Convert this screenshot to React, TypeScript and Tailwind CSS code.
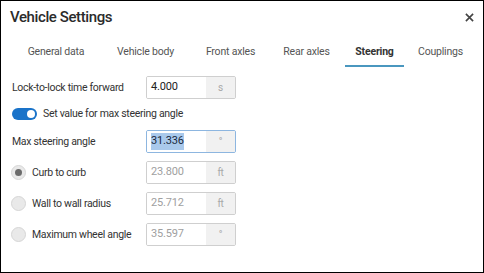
import { useState } from "react";

const TABS = [
  { label: "General data", w: "w-[90px]" },
  { label: "Vehicle body", w: "w-[89px]" },
  { label: "Front axles", w: "w-[81px]" },
  { label: "Rear axles", w: "w-[71px]" },
  { label: "Steering", w: "w-[65px]" },
  { label: "Couplings", w: "w-[67px]" },
];

function UnitInput({
  value,
  unit,
  disabled,
  focused,
}: {
  value: string;
  unit: string;
  disabled?: boolean;
  focused?: boolean;
}) {
  return (
    <div
      className={
        "flex h-[23px] w-[90px] overflow-hidden rounded-[2px] border " +
        (focused ? "border-[#8db6e0]" : "border-[#cfcfcf]")
      }
    >
      <div
        className={
          "flex flex-1 items-center bg-white pl-[4px] text-[11px] tracking-[-0.2px] " +
          (disabled ? "text-[#a0a0a0]" : "text-[#222]")
        }
      >
        {focused ? <span className="bg-[#a9c9ec] text-[#1a2a40]">{value}</span> : value}
      </div>
      <div className="flex w-[29px] items-center justify-center bg-[#f1f1f1] text-[10px] text-[#a8a8a8]">
        {unit}
      </div>
    </div>
  );
}

function Radio({ checked }: { checked?: boolean }) {
  return (
    <span className="flex h-[15px] w-[15px] items-center justify-center rounded-full border border-[#d6d6d6] bg-[#e9e9e9]">
      {checked && <span className="h-[7px] w-[7px] rounded-full bg-[#6b6b6b]" />}
    </span>
  );
}

export default function App() {
  const [mode, setMode] = useState(0);
  const radios = [
    { label: "Curb to curb", value: "23.800", unit: "ft" },
    { label: "Wall to wall radius", value: "25.712", unit: "ft" },
    { label: "Maximum wheel angle", value: "35.597", unit: "°" },
  ];

  return (
    <div className="h-[273px] w-[484px] border border-black bg-white font-['Roboto',sans-serif] text-[#333]">
      <header className="flex h-[31px] items-center justify-between pl-[9px] pr-[9px] pt-[1px]">
        <h1 className="text-[15px] font-medium tracking-[-0.4px] text-[#2b2b2b]">Vehicle Settings</h1>
        <button className="text-[#444]">
          <svg width="9" height="9" viewBox="0 0 10 10" stroke="currentColor" strokeWidth="1.8">
            <path d="M1 1l8 8M9 1l-8 8" />
          </svg>
        </button>
      </header>

      <nav className="mt-[4px] flex pl-[10px]">
        {TABS.map((t) => (
          <div key={t.label} className={"flex justify-center " + t.w}>
            <span
              className={
                "flex h-[31px] items-center border-b-[2px] px-[10px] pt-[2px] text-[10.5px] tracking-[-0.2px] " +
                (t.label === "Steering"
                  ? "border-[#4a97bf] font-bold text-[#333]"
                  : "border-transparent text-[#555]")
              }
            >
              {t.label}
            </span>
          </div>
        ))}
      </nav>

      <div className="flex flex-col px-[10px] pt-[9px] text-[10.5px] tracking-[-0.3px] text-[#333]">
        <div className="flex items-center">
          <span className="w-[135px] pl-[1px]">Lock-to-lock time forward</span>
          <UnitInput value="4.000" unit="s" />
        </div>

        <div className="mt-[5px] flex h-[20px] items-center gap-[6px] pl-[1px]">
          <span className="flex h-[12px] w-[25px] items-center justify-end rounded-full bg-[#1a73c9] pr-[2px]">
            <span className="h-[8px] w-[8px] rounded-full bg-white" />
          </span>
          <span>Set value for max steering angle</span>
        </div>

        <div className="mt-[6px] flex items-center">
          <span className="w-[135px] pl-[1px]">Max steering angle</span>
          <UnitInput value="31.336" unit="°" focused />
        </div>

        {radios.map((r, i) => (
          <div key={r.label} className="mt-[8px] flex items-center" onClick={() => setMode(i)}>
            <span className="flex w-[135px] items-center gap-[6px]">
              <Radio checked={mode === i} />
              {r.label}
            </span>
            <UnitInput value={r.value} unit={r.unit} disabled />
          </div>
        ))}
      </div>
    </div>
  );
}
